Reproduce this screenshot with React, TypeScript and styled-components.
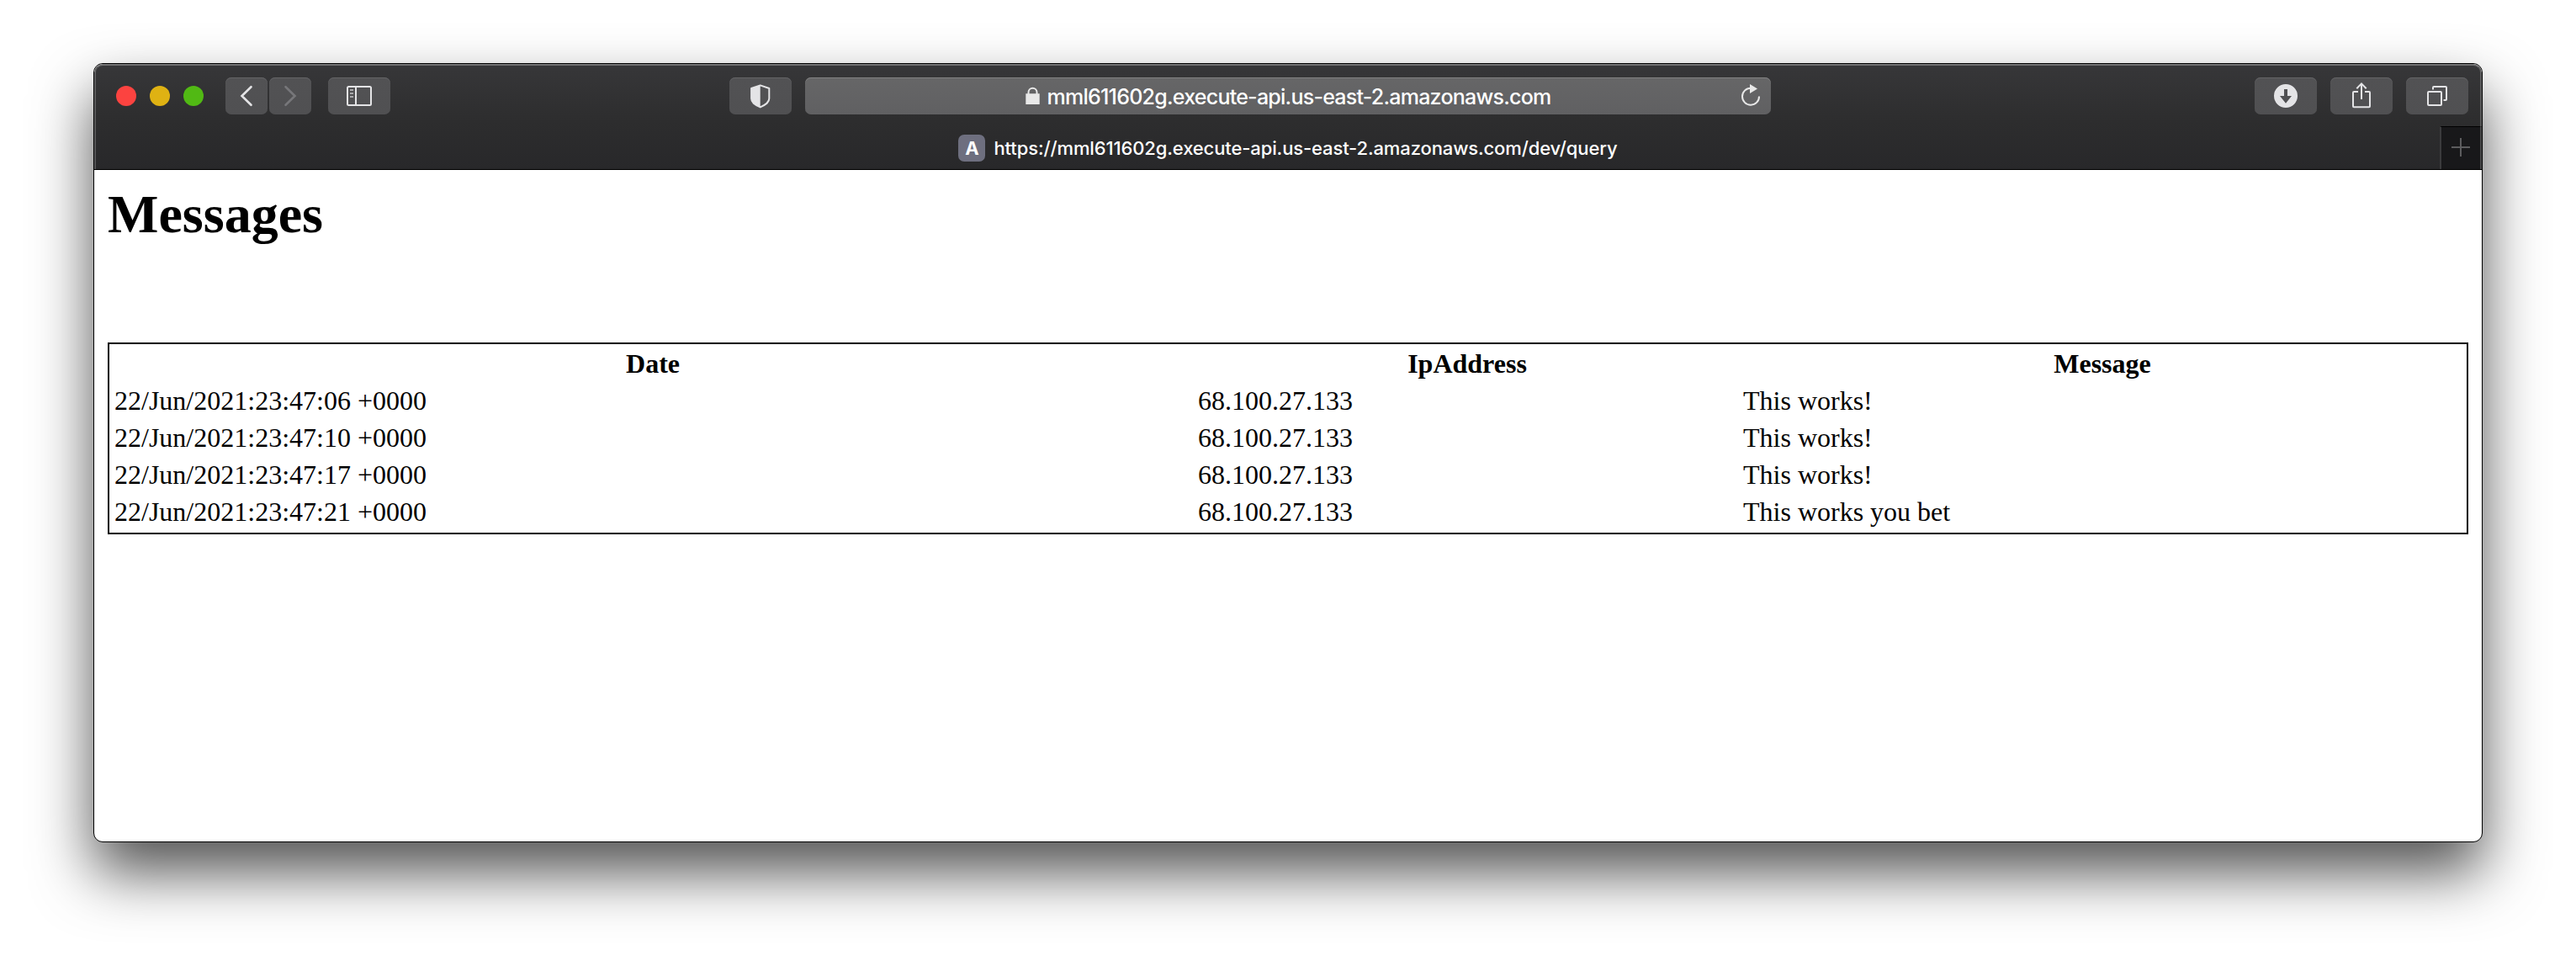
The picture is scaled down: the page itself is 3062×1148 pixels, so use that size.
import React from "react";
import styled, { createGlobalStyle } from "styled-components";

const GlobalStyle = createGlobalStyle`
  body { margin: 0; background: #fff; }
  * { box-sizing: border-box; }
`;

const Desktop = styled.div`
  width: 3062px;
  height: 1148px;
  padding: 75px 111px 147px;
  overflow: hidden;
`;

const BrowserWindow = styled.div`
  width: 2840px;
  height: 926px;
  border: 1px solid #000;
  border-radius: 11px;
  background: #fff;
  overflow: hidden;
  display: flex;
  flex-direction: column;
  box-shadow: 0 36px 70px rgba(0, 0, 0, 0.68);
`;

const Chrome = styled.header`
  position: relative;
  height: 126px;
  flex: none;
  border-bottom: 1px solid #000;
  border-radius: 10px 10px 0 0;
  background: linear-gradient(#373739, #2d2d2e 55%, #28282a);
  font-family: Inter, "Liberation Sans", sans-serif;
  color: #fff;
  &::after {
    content: "";
    position: absolute;
    inset: 0;
    border-radius: 10px 10px 0 0;
    border: 2px solid rgba(255, 255, 255, 0.2);
    border-top-color: rgba(255, 255, 255, 0.3);
    border-bottom: 0;
    pointer-events: none;
  }
`;

const Toolbar = styled.div`
  height: 74px;
  padding: 16px 16px 0 26px;
  display: grid;
  grid-template-columns: 729px 74px 16px 1148px 1fr;
  align-items: start;
`;

const Group = styled.div<{ $gap: number; $end?: boolean }>`
  height: 44px;
  display: flex;
  align-items: center;
  gap: ${(p) => p.$gap}px;
  justify-content: ${(p) => (p.$end ? "flex-end" : "flex-start")};
`;

const Light = styled.span<{ $color: string }>`
  width: 24px;
  height: 24px;
  border-radius: 50%;
  background: ${(p) => p.$color};
`;

const Lights = styled.div`
  display: flex;
  gap: 16px;
  margin-right: 24px;
`;

const ToolButton = styled.button<{ $width?: number }>`
  display: block;
  width: ${(p) => p.$width ?? 74}px;
  height: 44px;
  padding: 0;
  border: 0;
  border-radius: 7px;
  background: linear-gradient(#525254, #505052);
  box-shadow: inset 0 1px 0 #636365;
  color: #e4e4e6;
`;

const SidebarSlot = styled.div`
  margin-left: 18px;
`;

const Icon = styled.svg`
  display: block;
  fill: none;
  stroke: currentColor;
  stroke-width: 2;
`;

const AddressBar = styled.div`
  grid-column: 4;
  height: 44px;
  border-radius: 7px;
  background: linear-gradient(#666667, #606062);
  box-shadow: inset 0 1px 0 #818182;
  display: grid;
  grid-template-columns: 46px 1fr 46px;
  align-items: center;
`;

const Address = styled.div`
  grid-column: 2;
  display: flex;
  justify-content: center;
  align-items: center;
  gap: 9px;
`;

const AddressText = styled.span`
  padding-top: 2px;
  font-size: 25px;
  line-height: 42px;
  font-weight: 450;
  letter-spacing: -0.76px;
  white-space: nowrap;
`;

const TabBar = styled.div`
  height: 51px;
  display: grid;
  grid-template-columns: 50px 1fr 50px;
`;

const Tab = styled.div`
  grid-column: 2;
  display: flex;
  justify-content: center;
  align-items: center;
  gap: 10px;
  padding-top: 1px;
`;

const Favicon = styled.span`
  width: 32px;
  height: 32px;
  border-radius: 7px;
  background: #6e6f7f;
  font-size: 22px;
  line-height: 33px;
  font-weight: 700;
  text-align: center;
`;

const TabTitle = styled.span`
  font-size: 22px;
  font-weight: 500;
  letter-spacing: -0.12px;
  white-space: nowrap;
`;

const NewTab = styled.button`
  padding: 0;
  border: 0;
  border-top: 1px solid #000;
  border-left: 2px solid #3b3b3d;
  background: #18181a;
  color: #5c5c5e;
`;

const Page = styled.main`
  flex: 1;
  padding: 16px;
  font-family: "Liberation Serif", "Times New Roman", serif;
  color: #000;
`;

const Title = styled.h1`
  margin: 0;
  height: 189px;
  font-size: 64px;
  line-height: 74px;
  font-weight: 700;
`;

const Table = styled.table`
  width: 2806px;
  table-layout: fixed;
  border: 2px solid #000;
  border-collapse: separate;
  border-spacing: 4px;
  font-size: 32px;
  line-height: 36px;
`;

const Col = styled.col<{ $width: number }>`
  width: ${(p) => p.$width}px;
`;

const HeadCell = styled.th`
  padding: 1px 2px 3px;
  text-align: center;
`;

const Cell = styled.td`
  padding: 1px 2px 3px;
`;

const ROWS = [
  ["22/Jun/2021:23:47:06 +0000", "68.100.27.133", "This works!"],
  ["22/Jun/2021:23:47:10 +0000", "68.100.27.133", "This works!"],
  ["22/Jun/2021:23:47:17 +0000", "68.100.27.133", "This works!"],
  ["22/Jun/2021:23:47:21 +0000", "68.100.27.133", "This works you bet"],
];

export default function App() {
  return (
    <>
      <GlobalStyle />
      <Desktop>
        <BrowserWindow>
          <Chrome>
            <Toolbar>
              <Group $gap={2}>
                <Lights>
                  <Light $color="#fc4340" />
                  <Light $color="#dfb213" />
                  <Light $color="#51b914" />
                </Lights>
                <ToolButton $width={50} aria-label="Back">
                  <Icon width="50" height="44">
                    <path d="M30.5 11.2 19.5 22l11 10.8" strokeWidth="2.6" strokeLinecap="round" />
                  </Icon>
                </ToolButton>
                <ToolButton $width={50} aria-label="Forward">
                  <Icon width="50" height="44" color="#77777a">
                    <path d="M19.5 11.2 30.5 22l-11 10.8" strokeWidth="2.6" strokeLinecap="round" />
                  </Icon>
                </ToolButton>
                <SidebarSlot>
                  <ToolButton aria-label="Sidebar">
                    <Icon width="74" height="44">
                      <rect x="23" y="11" width="28" height="22" rx="1.5" />
                      <path d="M33 11v22" />
                      <path d="M26 15h4M26 19h4M26 23h4" stroke="#a9a9ab" />
                    </Icon>
                  </ToolButton>
                </SidebarSlot>
              </Group>
              <ToolButton aria-label="Privacy">
                <Icon width="74" height="44">
                  <path d="M36.7 9.4 47.3 13V25c0 4.6-3.6 7.2-10.6 10.4C29.7 32.2 26.1 29.6 26.1 25V13z" strokeLinejoin="round" />
                  <path d="M36.7 9.4V35.4C29.7 32.2 26.1 29.6 26.1 25V13z" fill="currentColor" stroke="none" />
                </Icon>
              </ToolButton>
              <AddressBar>
                <Address>
                  <Icon width="17" height="22" color="#e8e8e8">
                    <path d="M.3 8.3h16.4v12.7H.3z" fill="currentColor" stroke="none" />
                    <path d="M3.500 9.500V6.700a5 5 0 0 1 10 0V9.500" />
                  </Icon>
                  <AddressText>mml611602g.execute-api.us-east-2.amazonaws.com</AddressText>
                </Address>
                <Icon width="46" height="44" color="#e8e8e8">
                  <path d="M32 22.5a10 10 0 1 1-10-9.8" />
                  <path d="M21 8v11l9-5.6z" fill="currentColor" stroke="none" />
                </Icon>
              </AddressBar>
              <Group $gap={16} $end>
                <ToolButton aria-label="Downloads">
                  <Icon width="74" height="44">
                    <path
                      d="M37 8a14 14 0 1 0 0 28a14 14 0 1 0 0-28zM35 14h4v8h5l-7 8.8L30 22h5z"
                      fill="currentColor"
                      fillRule="evenodd"
                      stroke="none"
                    />
                  </Icon>
                </ToolButton>
                <ToolButton aria-label="Share">
                  <Icon width="74" height="44">
                    <path d="M33 17h-5a1 1 0 0 0-1 1v16.300a1 1 0 0 0 1 1h18a1 1 0 0 0 1-1V18a1 1 0 0 0-1-1h-5" />
                    <path d="M37 26V7.500M31.300 13.300 37 7.400l5.700 5.900" />
                  </Icon>
                </ToolButton>
                <ToolButton aria-label="Tabs">
                  <Icon width="74" height="44">
                    <rect x="26" y="17" width="16" height="16" rx="1" />
                    <path d="M32 14.500V12a1 1 0 0 1 1-1h14a1 1 0 0 1 1 1v14a1 1 0 0 1-1 1h-2.500" />
                  </Icon>
                </ToolButton>
              </Group>
            </Toolbar>
            <TabBar>
              <Tab>
                <Favicon>A</Favicon>
                <TabTitle>https://mml611602g.execute-api.us-east-2.amazonaws.com/dev/query</TabTitle>
              </Tab>
              <NewTab aria-label="New tab">
                <Icon width="48" height="50">
                  <path d="M12 24h22M23 13v22" />
                </Icon>
              </NewTab>
            </TabBar>
          </Chrome>
          <Page>
            <Title>Messages</Title>
            <Table>
              <colgroup>
                <Col $width={1284} />
                <Col $width={644} />
                <Col $width={858} />
              </colgroup>
              <thead>
                <tr>
                  <HeadCell>Date</HeadCell>
                  <HeadCell>IpAddress</HeadCell>
                  <HeadCell>Message</HeadCell>
                </tr>
              </thead>
              <tbody>
                {ROWS.map((row) => (
                  <tr key={row[0]}>
                    {row.map((value, i) => (
                      <Cell key={i}>{value}</Cell>
                    ))}
                  </tr>
                ))}
              </tbody>
            </Table>
          </Page>
        </BrowserWindow>
      </Desktop>
    </>
  );
}
